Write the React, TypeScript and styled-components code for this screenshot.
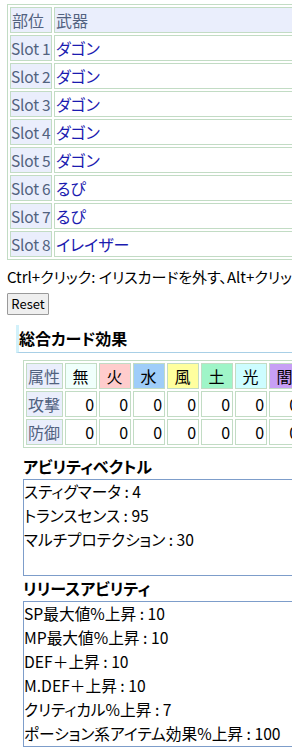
import React from "react";
import styled, { createGlobalStyle } from "styled-components";

const GlobalStyle = createGlobalStyle`
  html, body {
    margin: 0;
    padding: 0;
    background: #ffffff;
    overflow: hidden;
  }
  body {
    font-family: "Noto Sans CJK JP", "Noto Sans", sans-serif;
    font-feature-settings: "palt";
    color: #000;
  }
`;

const Page = styled.div`
  width: 520px;
  padding: 4px 0 0 7px;
  box-sizing: border-box;
`;

const SlotTable = styled.table`
  border: 1px solid #c2dcc4;
  border-spacing: 2px;
  table-layout: fixed;
  width: 460px;
  font-size: 16px;
  line-height: 22px;
`;

const Cell = styled.td<{ $kind: "head" | "label" | "value" }>`
  border: 1px solid #c2dcc4;
  padding: ${(p) => (p.$kind === "label" ? "1px 0 1px 0" : "1px")};
  white-space: nowrap;
  text-align: left;
  font-weight: normal;
  font-size: ${(p) => (p.$kind === "label" ? "15.5px" : "16px")};
  letter-spacing: ${(p) => (p.$kind === "label" ? "-0.2px" : "0")};
  background: ${(p) => (p.$kind === "value" ? "#ffffff" : "#eaeefc")};
  color: ${(p) => (p.$kind === "value" ? "#1b1bb0" : "#52627f")};
`;

const LabelCol = styled.col`
  width: 42px;
`;

const Hint = styled.div`
  margin: 6px 0 5px;
  font-size: 15px;
  line-height: 22px;
  white-space: nowrap;
`;

const ResetButton = styled.button`
  display: block;
  width: 42px;
  height: 22px;
  padding: 0;
  font-family: inherit;
  font-feature-settings: "palt";
  font-size: 13px;
  line-height: 20px;
  color: #000;
  background: #efefef;
  border: 1px solid #9a9a9a;
  border-radius: 1px;
`;

const Panel = styled.section`
  margin: 10px 0 0 9px;
`;

const PanelTitle = styled.h3`
  margin: 0;
  padding-left: 0;
  border-left: 3px solid #d2f1fa;
  border-bottom: 1px solid #a8cfe6;
  font-size: 16px;
  font-weight: bold;
  line-height: 27px;
  white-space: nowrap;
`;

const PanelBody = styled.div`
  padding: 7px 0 0 7px;
`;

const ElemTable = styled.table`
  border: 1px solid #c2dcc4;
  border-spacing: 2px;
  table-layout: fixed;
  font-size: 16px;
  line-height: 22px;
`;

const ElemCell = styled.td<{ $bg: string; $kind: "label" | "head" | "num" }>`
  box-sizing: border-box;
  height: 26px;
  width: ${(p) => (p.$kind === "label" ? "34px" : "32px")};
  min-width: ${(p) => (p.$kind === "label" ? "34px" : "32px")};
  border: 1px solid #c2dcc4;
  padding: 1px 2px 1px 1px;
  white-space: nowrap;
  background: ${(p) => p.$bg};
  color: ${(p) => (p.$kind === "label" ? "#52627f" : "#000")};
  text-align: ${(p) => (p.$kind === "head" ? "center" : p.$kind === "num" ? "right" : "left")};
`;

const SubTitle = styled.h4<{ $gap: number }>`
  margin: ${(p) => p.$gap}px 0 0;
  font-size: 16px;
  font-weight: bold;
  line-height: 25px;
  white-space: nowrap;
`;

const ListBox = styled.div<{ $min: number }>`
  width: 360px;
  min-height: ${(p) => p.$min}px;
  border: 1px solid #7d9dca;
  font-size: 15.7px;
  line-height: 24px;
`;

const ListLine = styled.div`
  white-space: nowrap;
`;

const slots = [
  ["Slot 1", "ダゴン"],
  ["Slot 2", "ダゴン"],
  ["Slot 3", "ダゴン"],
  ["Slot 4", "ダゴン"],
  ["Slot 5", "ダゴン"],
  ["Slot 6", "るぴ"],
  ["Slot 7", "るぴ"],
  ["Slot 8", "イレイザー"],
];

const elements: { name: string; bg: string }[] = [
  { name: "無", bg: "#f0fffc" },
  { name: "火", bg: "#ffcccc" },
  { name: "水", bg: "#9fcdf9" },
  { name: "風", bg: "#ffff9e" },
  { name: "土", bg: "#9ff5c8" },
  { name: "光", bg: "#cdfdff" },
  { name: "闇", bg: "#c79ff5" },
];

const vector = ["スティグマータ : 4", "トランスセンス : 95", "マルチプロテクション : 30"];

const release = [
  "SP最大値%上昇 : 10",
  "MP最大値%上昇 : 10",
  "DEF＋上昇 : 10",
  "M.DEF＋上昇 : 10",
  "クリティカル%上昇 : 7",
  "ポーション系アイテム効果%上昇 : 100",
];

export default function App() {
  return (
    <>
      <GlobalStyle />
      <Page>
        <SlotTable>
          <colgroup>
            <LabelCol />
            <col />
          </colgroup>
          <tbody>
            <tr>
              <Cell as="th" $kind="head">部位</Cell>
              <Cell as="th" $kind="head">武器</Cell>
            </tr>
            {slots.map(([s, w]) => (
              <tr key={s}>
                <Cell $kind="label">{s}</Cell>
                <Cell $kind="value">{w}</Cell>
              </tr>
            ))}
          </tbody>
        </SlotTable>
        <Hint>Ctrl+クリック: イリスカードを外す、Alt+クリック: イリスカードを付ける</Hint>
        <ResetButton type="button">Reset</ResetButton>
        <Panel>
          <PanelTitle>総合カード効果</PanelTitle>
          <PanelBody>
            <ElemTable>
              <tbody>
                <tr>
                  <ElemCell $kind="label" $bg="#eaeefc">属性</ElemCell>
                  {elements.map((e) => (
                    <ElemCell key={e.name} $kind="head" $bg={e.bg}>
                      {e.name}
                    </ElemCell>
                  ))}
                </tr>
                {["攻撃", "防御"].map((r) => (
                  <tr key={r}>
                    <ElemCell $kind="label" $bg="#eaeefc">{r}</ElemCell>
                    {elements.map((e) => (
                      <ElemCell key={e.name} $kind="num" $bg="#ffffff">
                        0
                      </ElemCell>
                    ))}
                  </tr>
                ))}
              </tbody>
            </ElemTable>
            <SubTitle $gap={6}>アビリティベクトル</SubTitle>
            <ListBox $min={95}>
              {vector.map((v) => (
                <ListLine key={v}>{v}</ListLine>
              ))}
            </ListBox>
            <SubTitle $gap={0}>リリースアビリティ</SubTitle>
            <ListBox $min={144}>
              {release.map((v) => (
                <ListLine key={v}>{v}</ListLine>
              ))}
            </ListBox>
          </PanelBody>
        </Panel>
      </Page>
    </>
  );
}
